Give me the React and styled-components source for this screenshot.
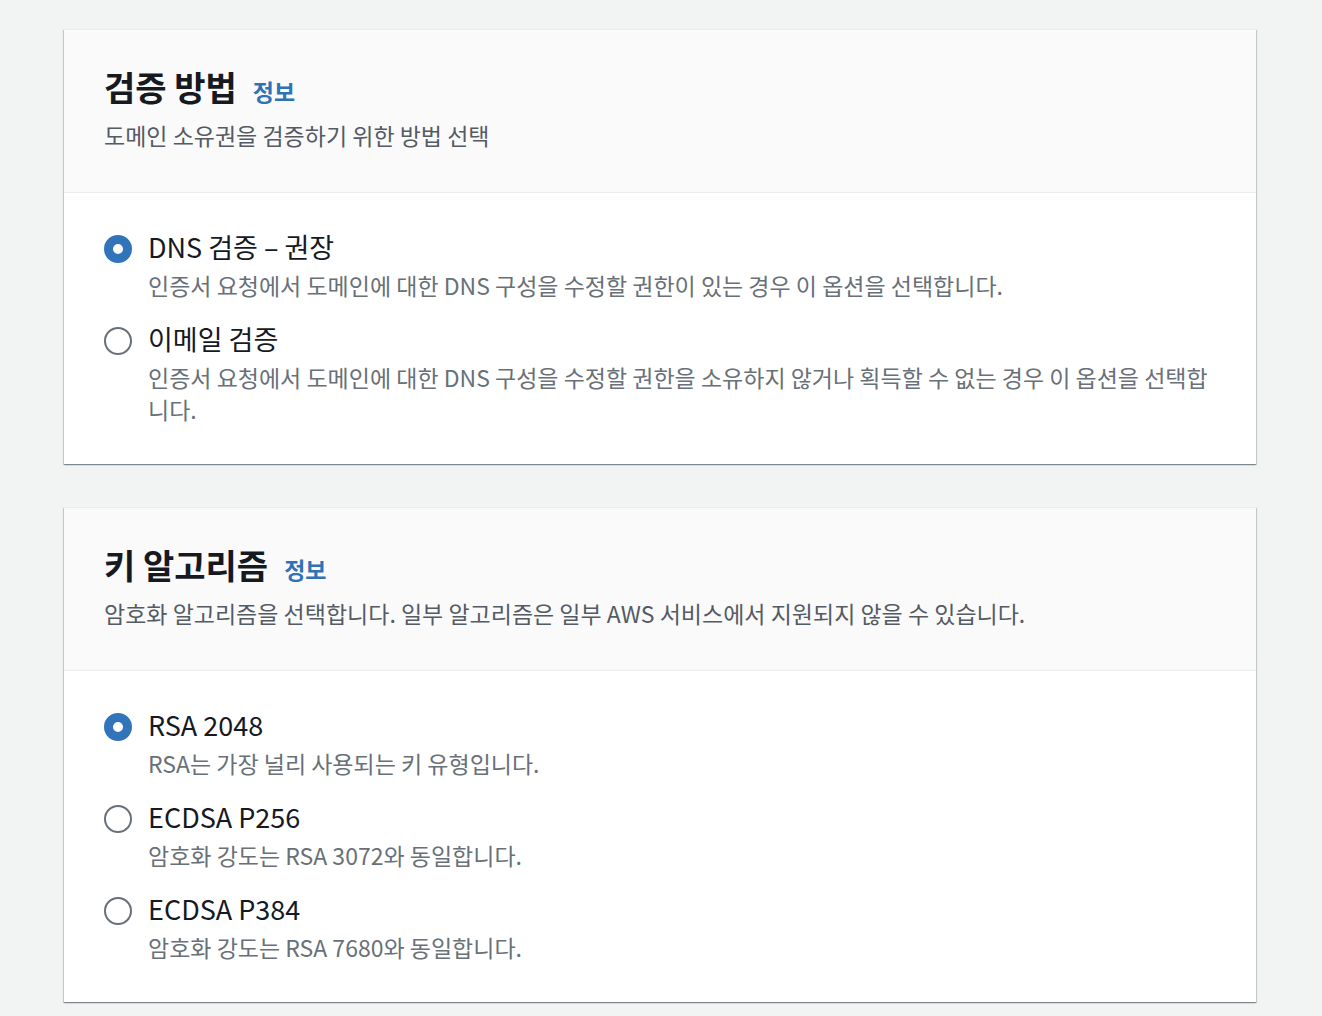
import React from "react";
import styled, { createGlobalStyle } from "styled-components";

const Global = createGlobalStyle`
  html, body { margin: 0; padding: 0; background: #f2f3f3; }
  body { font-family: "Noto Sans CJK KR", "Noto Sans", sans-serif; color: #16191f; }
`;

const Page = styled.div`
  padding: 29px 0 40px 64px;
  display: flex;
  flex-direction: column;
  gap: 43px;
`;

const Card = styled.section`
  width: 1192px;
  background: #fff;
  border-top: 1px solid #eaeded;
  box-shadow: 0 1px 1px 0 rgba(0, 28, 36, 0.3), 1px 1px 1px 0 rgba(0, 28, 36, 0.15),
    -1px 1px 1px 0 rgba(0, 28, 36, 0.15);
`;

const Header = styled.header`
  background: #fafafa;
  border-bottom: 1px solid #eaeded;
  padding: 37px 40px 41px;
  display: flex;
  flex-direction: column;
  gap: 11px;
`;

const TitleRow = styled.div`
  display: flex;
  align-items: baseline;
  gap: 16px;
`;

const Title = styled.h2`
  margin: 0;
  font-size: 34px;
  line-height: 40px;
  font-weight: 700;
  color: #16191f;
`;

const Info = styled.a`
  font-size: 23px;
  font-weight: 700;
  color: #2e73b8;
  text-decoration: none;
`;

const HeaderDesc = styled.p`
  margin: 0;
  font-size: 23px;
  line-height: 32px;
  color: #545b64;
`;

const Body = styled.div`
  padding: 36px 40px 39px;
  display: flex;
  flex-direction: column;
  gap: 20px;
`;

const Option = styled.label`
  display: grid;
  grid-template-columns: 28px 1fr;
  column-gap: 16px;
  cursor: pointer;
`;

const Radio = styled.span`
  width: 28px;
  height: 28px;
  margin-top: 6px;
  box-sizing: border-box;
  border-radius: 50%;
  border: ${(p) => (p.$checked ? "9px solid #3174ba" : "2px solid #687078")};
  background: #fff;
`;

const Texts = styled.div`
  display: flex;
  flex-direction: column;
  gap: 4px;
`;

const Label = styled.span`
  font-size: 27px;
  line-height: 36px;
  color: #16191f;
`;

const Desc = styled.span`
  font-size: 23px;
  line-height: 32px;
  color: #687078;
`;

const sections = [
  {
    title: "검증 방법",
    desc: "도메인 소유권을 검증하기 위한 방법 선택",
    options: [
      {
        label: "DNS 검증 – 권장",
        desc: "인증서 요청에서 도메인에 대한 DNS 구성을 수정할 권한이 있는 경우 이 옵션을 선택합니다.",
        checked: true,
      },
      {
        label: "이메일 검증",
        desc: "인증서 요청에서 도메인에 대한 DNS 구성을 수정할 권한을 소유하지 않거나 획득할 수 없는 경우 이 옵션을 선택합니다.",
      },
    ],
  },
  {
    title: "키 알고리즘",
    desc: "암호화 알고리즘을 선택합니다. 일부 알고리즘은 일부 AWS 서비스에서 지원되지 않을 수 있습니다.",
    options: [
      { label: "RSA 2048", desc: "RSA는 가장 널리 사용되는 키 유형입니다.", checked: true },
      { label: "ECDSA P256", desc: "암호화 강도는 RSA 3072와 동일합니다." },
      { label: "ECDSA P384", desc: "암호화 강도는 RSA 7680와 동일합니다." },
    ],
  },
];

export default function App() {
  return (
    <>
      <Global />
      <Page>
        {sections.map((s) => (
          <Card key={s.title}>
            <Header>
              <TitleRow>
                <Title>{s.title}</Title>
                <Info href="#">정보</Info>
              </TitleRow>
              <HeaderDesc>{s.desc}</HeaderDesc>
            </Header>
            <Body>
              {s.options.map((o) => (
                <Option key={o.label}>
                  <Radio $checked={o.checked} />
                  <Texts>
                    <Label>{o.label}</Label>
                    <Desc>{o.desc}</Desc>
                  </Texts>
                </Option>
              ))}
            </Body>
          </Card>
        ))}
      </Page>
    </>
  );
}
